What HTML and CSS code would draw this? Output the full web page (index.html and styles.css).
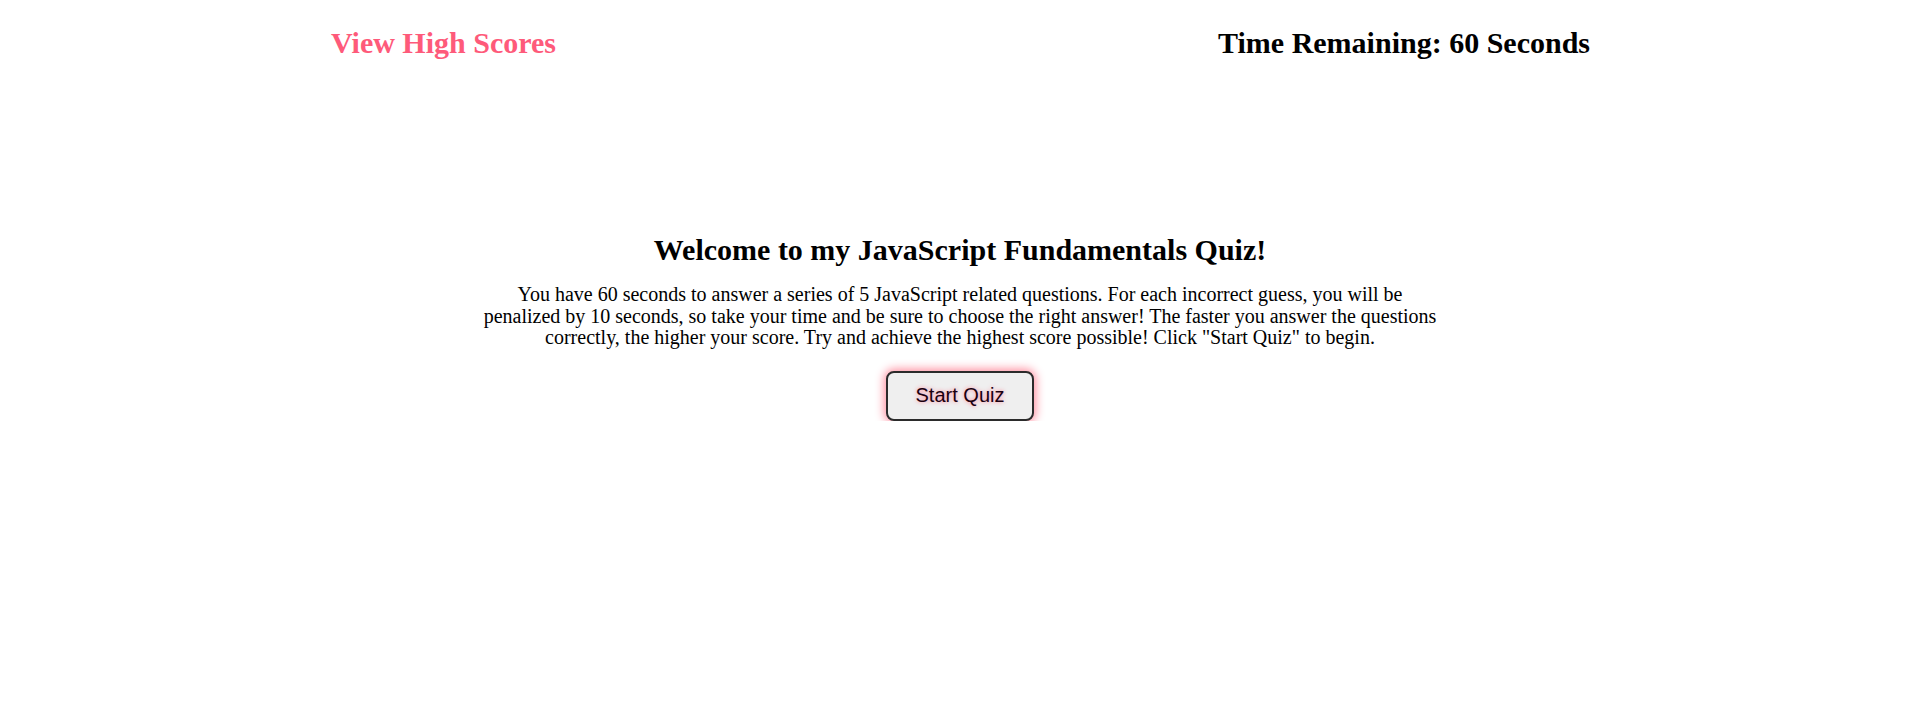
FILE: index.html
```html
<!DOCTYPE html>
<html lang="en">
<head>
<meta charset="utf-8">
<title>JavaScript Fundamentals Quiz</title>
<link rel="stylesheet" href="styles.css">
</head>
<body>
<header class="top-bar">
  <h2 class="high-scores">View High Scores</h2>
  <h2 class="timer">Time Remaining: 60 Seconds</h2>
</header>
<main class="intro">
  <h2 class="intro-title">Welcome to my JavaScript Fundamentals Quiz!</h2>
  <p class="intro-text">You have 60 seconds to answer a series of 5 JavaScript related questions. For each incorrect guess, you will be penalized by 10 seconds, so take your time and be sure to choose the right answer! The faster you answer the questions correctly, the higher your score. Try and achieve the highest score possible! Click "Start Quiz" to begin.</p>
  <button class="start-btn" type="button">Start Quiz</button>
</main>
</body>
</html>
```

FILE: styles.css
```css
html, body {
  margin: 0;
  padding: 0;
  background: #ffffff;
}

body {
  font-family: "Liberation Serif", "Times New Roman", serif;
  color: #000000;
}

.top-bar {
  display: flex;
  justify-content: space-between;
  align-items: flex-start;
  padding: 0 330px 0 331px;
}

.top-bar h2 {
  font-size: 30px;
  font-weight: bold;
  margin: 26px 0 25px;
  line-height: normal;
}

.high-scores {
  color: #fe5a7a;
}

.timer {
  color: #000000;
}

.intro {
  display: flex;
  flex-direction: column;
  align-items: center;
  width: 960px;
  margin: 148px auto 0;
  text-align: center;
}

.intro-title {
  font-size: 30px;
  font-weight: bold;
  margin: 0;
  line-height: normal;
}

.intro-text {
  font-size: 20px;
  line-height: 21.5px;
  margin: 17px 0 0;
}

.start-btn {
  margin-top: 22px;
  font-family: "Liberation Sans", Arial, sans-serif;
  font-size: 20px;
  color: #1a0010;
  background: #efefef;
  border: 2px solid #2b2b2b;
  border-radius: 8px;
  padding: 11px 28px 12px;
  line-height: 23px;
  box-shadow: 0 0 10px 2px #ff8fa0;
  text-shadow: 0 0 4px #ff7d92;
  cursor: pointer;
}
```
